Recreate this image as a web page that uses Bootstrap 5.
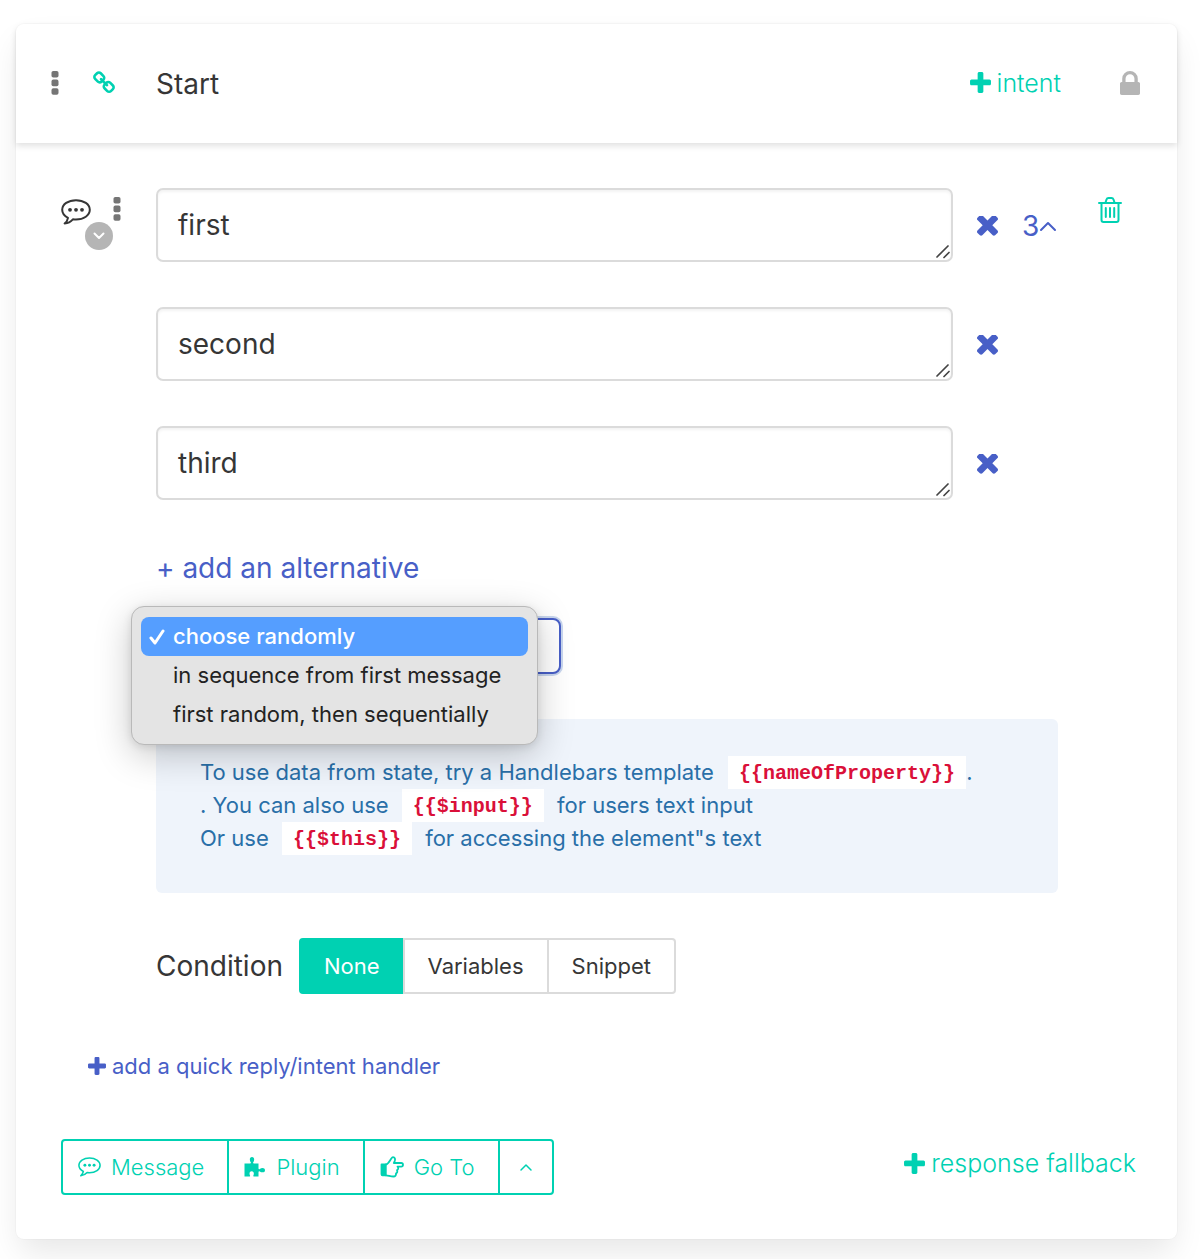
<!DOCTYPE html>
<html lang="en">
<head>
<meta charset="utf-8">
<meta name="viewport" content="width=device-width, initial-scale=1">
<title>Start – dialog screen</title>
<link href="https://cdn.jsdelivr.net/npm/bootstrap@5.3.0/dist/css/bootstrap.min.css" rel="stylesheet">
<style>
  :root { --teal: #00d1b2; --indigo: #485fc7; }
  body { font-family: Inter, "Liberation Sans", sans-serif; font-size: 28px; line-height: 40px; color: #363636; background: #fff; }
  button, textarea, select { font-family: inherit; }
  svg { display: block; flex: none; fill: currentColor; }
  .line-icon { fill: none; stroke: currentColor; stroke-linecap: round; stroke-linejoin: round; }

  .screen { margin: 24px 23px 20px 16px; border-radius: 8px; background: #fff; box-shadow: 0 16px 32px -4px rgba(10,10,10,.1), 0 0 0 1px rgba(10,10,10,.02); }
  .screen-head { height: 119px; padding: 0 37px 2px 35px; box-shadow: 0 3px 6px rgba(10,10,10,.12); border-radius: 8px 8px 0 0; }
  .head-left { width: 105px; gap: 33px; }
  .screen-title { padding-top: 2px; }
  .screen-body { padding: 45px 0 44px; }
  .plain { border: 0; background: none; padding: 0; display: inline-flex; align-items: center; text-decoration: none; color: inherit; }
  .teal { color: var(--teal); }
  .indigo { color: var(--indigo); }
  .dim { color: #757575; }
  .pale { color: #b5b5b5; }
  .accent { font-size: 25px; font-weight: 300; gap: 6px; }
  .lock { margin-left: 59px; }

  .gutter { width: 140px; padding: 9px 0 0 45px; }
  .gutter-stack { position: relative; width: 60px; height: 54px; }
  .gutter-chat { position: absolute; left: 0; top: 2px; }
  .gutter-dots { position: absolute; right: 0; top: 0; }
  .gutter-more { position: absolute; left: 24px; top: 25px; width: 28px; height: 28px; border-radius: 50%; background: #b5b5b5; color: #fff; justify-content: center; }
  .side { width: 119px; padding: 8px 0 0 40px; line-height: 34px; }

  .alt { margin-bottom: 45px; }
  .alt-field { position: relative; }
  .alt-field textarea { display: block; width: 100%; height: 74px; padding: 14px 20px; border: 2px solid #dbdbdb; border-radius: 7px; font-size: 28px; line-height: 42px; color: #363636; resize: none; overflow: hidden; box-shadow: inset 0 2px 3px rgba(10,10,10,.05); outline: 0; }
  .alt-grip { position: absolute; right: 3px; bottom: 3px; color: #444; }
  .alt-tools { width: 105px; padding: 2px 0 0 24px; gap: 24px; }
  .alt-more { padding-top: 3px; }

  .order { position: relative; width: 405px; margin: 30px 0 45px; }
  .order select { display: block; width: 100%; height: 56px; border: 2px solid var(--indigo); border-radius: 8px; appearance: none; background: #fff; padding: 0 22px; font-size: 22px; color: #363636; box-shadow: 0 0 0 2px rgba(72,120,199,.3); outline: 0; }
  .order-menu { position: absolute; left: -25px; top: -12px; z-index: 5; width: 407px; padding: 10px 9px; border: 1px solid #b9b9b9; border-radius: 13px; background: #e4e4e4; box-shadow: 0 10px 36px rgba(0,0,0,.22), 0 2px 8px rgba(0,0,0,.1); font-size: 22px; line-height: 39px; color: #222; list-style: none; margin: 0; }
  .order-menu li { display: flex; align-items: center; padding-left: 8px; gap: 8px; height: 39px; white-space: nowrap; }
  .order-menu .picked { background: #559eff; color: #fff; border-radius: 8px; font-weight: 500; }
  .tick { width: 16px; }

  .hint { background: #eff4fb; color: #296fa8; border-radius: 6px; min-height: 174px; padding: 37px 44px; font-size: 22px; line-height: 33px; }
  .hint p { margin: 0; }
  .hint code { display: inline-block; height: 33px; padding: 0 11px; margin: 0 7px; background: #fff; color: #da1039; font-family: "Liberation Mono", monospace; font-size: 20px; font-weight: 700; line-height: 35px; vertical-align: top; }
  .hint code.flush { margin: 0 0 0 8px; }

  .cond { margin-top: 45px; gap: 16px; }
  .seg { height: 56px; padding: 0 23px; border: 2px solid #dbdbdb; background: #fff; color: #363636; font-size: 22px; border-radius: 4px; }
  .seg + .seg { margin-left: -2px; }
  .seg.on { background: var(--teal); border-color: var(--teal); color: #fff; }
  .seg:not(:last-child) { border-top-right-radius: 0; border-bottom-right-radius: 0; }
  .seg:not(:first-child) { border-top-left-radius: 0; border-bottom-left-radius: 0; }
  .quick { margin: 52px 0 0 72px; font-size: 22px; gap: 6px; }

  .foot { margin-top: 53px; padding: 0 41px 0 45px; }
  .seg.add { height: 56px; padding: 0 23px 0 15px; border-color: var(--teal); color: var(--teal); font-weight: 300; display: inline-flex; align-items: center; gap: 10px; }
  .seg.add.up { padding: 0 19px; }
  .fallback { padding-bottom: 8px; }
</style>
</head>
<body>
<svg width="0" height="0" class="position-absolute" aria-hidden="true">
  <symbol id="i-plus" viewBox="190 130 1412 1412"><path d="M1600 736v192q0 40-28 68t-68 28h-416v416q0 40-28 68t-68 28h-192q-40 0-68-28t-28-68v-416h-416q-40 0-68-28t-28-68v-192q0-40 28-68t68-28h416v-416q0-40 28-68t68-28h192q40 0 68 28t28 68v416h416q40 0 68 28t28 68z"/></symbol>
  <symbol id="i-times" viewBox="302 434 1188 1188"><path d="M1490 1322q0 40-28 68l-136 136q-28 28-68 28t-68-28l-294-294-294 294q-28 28-68 28t-68-28l-136-136q-28-28-28-68t28-68l294-294-294-294q-28-28-28-68t28-68l136-136q28-28 68-28t68 28l294 294 294-294q28-28 68-28t68 28l136 136q28 28 28 68t-28 68l-294 294 294 294q28 28 28 68z"/></symbol>
  <symbol id="i-dots" viewBox="0 0 8 24"><rect x="0.500" width="7" height="6.600" rx="1.800"/><rect x="0.500" y="8.600" width="7" height="6.600" rx="1.800"/><rect x="0.500" y="17.200" width="7" height="6.600" rx="1.800"/></symbol>
  <symbol id="i-chat" viewBox="0 0 30 26"><path d="M15 1.200C7.200 1.200 1.200 5.300 1.200 10.800c0 3.300 2.200 6.200 5.800 8-.4 2.300-1.600 4.300-3.400 5.700 3.500-.3 6.100-1.700 8.300-4.200 1 .1 2 .2 3.100.2 7.800 0 13.800-4.200 13.800-9.700S22.800 1.200 15 1.200z" fill="none" stroke="currentColor" stroke-width="2" stroke-linejoin="round"/><circle cx="9" cy="10.800" r="1.900"/><circle cx="15" cy="10.800" r="1.900"/><circle cx="21" cy="10.800" r="1.900"/></symbol>
</svg>

<main class="screen">
  <header class="screen-head d-flex align-items-center">
    <div class="head-left d-flex align-items-center">
      <button class="plain dim" type="button" aria-label="Screen options"><svg width="8" height="24"><use href="#i-dots"/></svg></button>
      <a class="plain teal" href="#link" aria-label="Link to screen"><svg width="24" height="24" viewBox="0 0 1792 1792"><path d="M1520 1216q0-40-28-68l-208-208q-28-28-68-28-42 0-72 32 3 3 19 18.500t21.500 21.500 15 19 13 25.500 3.500 27.500q0 40-28 68t-68 28q-15 0-27.500-3.500t-25.500-13-19-15-21.500-21.500-18.500-19q-33 31-33 73 0 40 28 68l206 207q27 27 68 27 40 0 68-26l147-146q28-28 28-67zm-703-705q0-40-28-68l-206-207q-28-28-68-28-39 0-68 27l-147 146q-28 28-28 67 0 40 28 68l208 208q27 27 68 27 42 0 72-31-3-3-19-18.500t-21.500-21.500-15-19-13-25.500-3.500-27.500q0-40 28-68t68-28q15 0 27.500 3.500t25.500 13 19 15 21.500 21.500 18.500 19q33-31 33-73zm895 705q0 120-85 203l-147 146q-83 83-203 83-121 0-204-85l-206-207q-83-83-83-203 0-123 88-209l-88-88q-86 88-208 88-120 0-204-84l-208-208q-84-84-84-204t85-203l147-146q83-83 203-83 121 0 204 85l206 207q83 83 83 203 0 123-88 209l88 88q86-88 208-88 120 0 204 84l208 208q84 84 84 204z"/></svg></a>
    </div>
    <div class="screen-title flex-grow-1">Start</div>
    <button class="plain teal accent" type="button"><svg width="21" height="21"><use href="#i-plus"/></svg>intent</button>
    <button class="plain pale lock" type="button" aria-label="Lock"><svg width="20" height="24" viewBox="320 128 1152 1408" preserveAspectRatio="none"><path d="M640 768h512v-192q0-106-75-181t-181-75-181 75-75 181v192zm832 96v576q0 40-28 68t-68 28h-960q-40 0-68-28t-28-68v-576q0-40 28-68t68-28h32v-192q0-184 132-316t316-132 316 132 132 316v192h32q40 0 68 28t28 68z"/></svg></button>
  </header>

  <div class="screen-body">
    <section class="d-flex">
      <div class="gutter">
        <div class="gutter-stack">
          <svg class="gutter-chat" width="30" height="26"><use href="#i-chat"/></svg>
          <button class="plain dim gutter-dots" type="button" aria-label="Message options"><svg width="8" height="24"><use href="#i-dots"/></svg></button>
          <button class="plain gutter-more" type="button" aria-label="Expand"><svg class="line-icon" width="12" height="8" viewBox="0 0 12 8" stroke-width="2"><path d="M1.500 1.500 6 6l4.500-4.500"/></svg></button>
        </div>
      </div>

      <div class="flex-grow-1">
        <div class="alt d-flex align-items-center">
          <div class="alt-field flex-grow-1"><textarea aria-label="First message">first</textarea><svg class="alt-grip line-icon" width="14" height="14" viewBox="0 0 14 14" stroke-width="1.700"><path d="M1 12 12 1M8 12.500l5-5"/></svg></div>
          <div class="alt-tools d-flex align-items-center indigo">
            <button class="plain" type="button" aria-label="Remove first"><svg width="21" height="21"><use href="#i-times"/></svg></button>
            <button class="plain" type="button">3<svg class="line-icon" width="18" height="12" viewBox="0 0 18 12" stroke-width="2"><path d="M2 10 9 3l7 7"/></svg></button>
          </div>
        </div>
        <div class="alt d-flex align-items-center">
          <div class="alt-field flex-grow-1"><textarea aria-label="Second message">second</textarea><svg class="alt-grip line-icon" width="14" height="14" viewBox="0 0 14 14" stroke-width="1.700"><path d="M1 12 12 1M8 12.500l5-5"/></svg></div>
          <div class="alt-tools d-flex align-items-center indigo">
            <button class="plain" type="button" aria-label="Remove second"><svg width="21" height="21"><use href="#i-times"/></svg></button>
          </div>
        </div>
        <div class="alt d-flex align-items-center">
          <div class="alt-field flex-grow-1"><textarea aria-label="Third message">third</textarea><svg class="alt-grip line-icon" width="14" height="14" viewBox="0 0 14 14" stroke-width="1.700"><path d="M1 12 12 1M8 12.500l5-5"/></svg></div>
          <div class="alt-tools d-flex align-items-center indigo">
            <button class="plain" type="button" aria-label="Remove third"><svg width="21" height="21"><use href="#i-times"/></svg></button>
          </div>
        </div>

        <a class="plain indigo alt-more" href="#add">+ add an alternative</a>

        <div class="order">
          <select aria-label="Order of alternatives">
            <option selected>choose randomly</option>
            <option>in sequence from first message</option>
            <option>first random, then sequentially</option>
          </select>
          <ul class="order-menu">
            <li class="picked"><svg class="tick line-icon" width="16" height="18" viewBox="0 0 16 18" stroke-width="3"><path d="M2 10l4 5L14 3"/></svg>choose randomly</li>
            <li><span class="tick"></span>in sequence from first message</li>
            <li><span class="tick"></span>first random, then sequentially</li>
          </ul>
        </div>

        <div class="hint">
          <p>To use data from state, try a Handlebars template <code class="flush">{{nameOfProperty}}</code>.</p>
          <p>. You can also use <code>{{$input}}</code> for users text input</p>
          <p>Or use <code>{{$this}}</code> for accessing the element"s text</p>
        </div>

        <div class="cond d-flex align-items-center">
          <span>Condition</span>
          <div class="d-flex" role="group" aria-label="Condition">
            <button class="seg on" type="button">None</button><button class="seg" type="button">Variables</button><button class="seg" type="button">Snippet</button>
          </div>
        </div>
      </div>

      <div class="side">
        <button class="plain teal" type="button" aria-label="Delete message"><svg class="line-icon" width="24" height="26" viewBox="0 0 24 26" stroke-width="2"><path d="M1 6h22M3.500 6v17a2 2 0 0 0 2 2h13a2 2 0 0 0 2-2V6M7.500 5.500 8.500 2.500Q9 1 10.500 1h3Q15 1 15.500 2.500l1 3"/><path d="M7.800 11v9M12 11v9M16.200 11v9"/></svg></button>
      </div>
    </section>

    <a class="plain indigo quick" href="#quick"><svg width="18" height="18"><use href="#i-plus"/></svg>add a quick reply/intent handler</a>

    <footer class="foot d-flex justify-content-between align-items-center">
      <div class="d-flex" role="group" aria-label="Add element">
        <button class="seg add" type="button"><svg width="23" height="20" viewBox="0 0 30 26"><use href="#i-chat"/></svg>Message</button>
        <button class="seg add" type="button"><svg width="22" height="22" viewBox="0 0 22 22"><path d="M.5 7.500H6c1 0 1.200-.6.700-1.300C5.300 4.200 5.500 1 8 1s2.700 3.200 1.300 5.200c-.5.700-.3 1.300.7 1.300h4.500v4.700c0 1 .6 1.200 1.300.7 2-1.400 5.200-1.200 5.200 1.300s-3.200 2.700-5.200 1.300c-.7-.5-1.300-.3-1.300.7V20.500H9.800c-.6 0-.7-.5-.4-1.100.8-1.600.7-4.100-1.700-4.100s-2.600 2.500-1.700 4.100c.3.600.2 1.100-.4 1.100H.5z"/></svg>Plugin</button>
        <button class="seg add" type="button"><svg class="line-icon" width="24" height="22" viewBox="0 0 24 22" stroke-width="1.800"><path d="M1.500 8.500h4.300v10.800H2.500a1 1 0 0 1-1-1z" fill="currentColor"/><path d="M5.800 8.500C8.300 8.500 9.500 5 11 3c.6-.8 1-1.800 2-1.800 2 0 2.400 1.800 1.800 3.600L13.800 7h7.400c2.400 0 2.400 3.700 0 3.700h-3.700c1.200 1.200.9 3-.5 3.500.7 1.300.2 2.700-1 3.200.3 1.800-.7 3.100-2.500 3.100-3.500 0-5-1.200-7.700-1.200"/></svg>Go To</button>
        <button class="seg add up" type="button" aria-label="More elements"><svg class="line-icon" width="14" height="10" viewBox="0 0 14 10" stroke-width="1.500"><path d="M2 8l5-5 5 5"/></svg></button>
      </div>
      <button class="plain teal accent fallback" type="button"><svg width="21" height="21"><use href="#i-plus"/></svg>response fallback</button>
    </footer>
  </div>
</main>
<script src="https://cdn.jsdelivr.net/npm/bootstrap@5.3.0/dist/js/bootstrap.bundle.min.js"></script>
</body>
</html>
